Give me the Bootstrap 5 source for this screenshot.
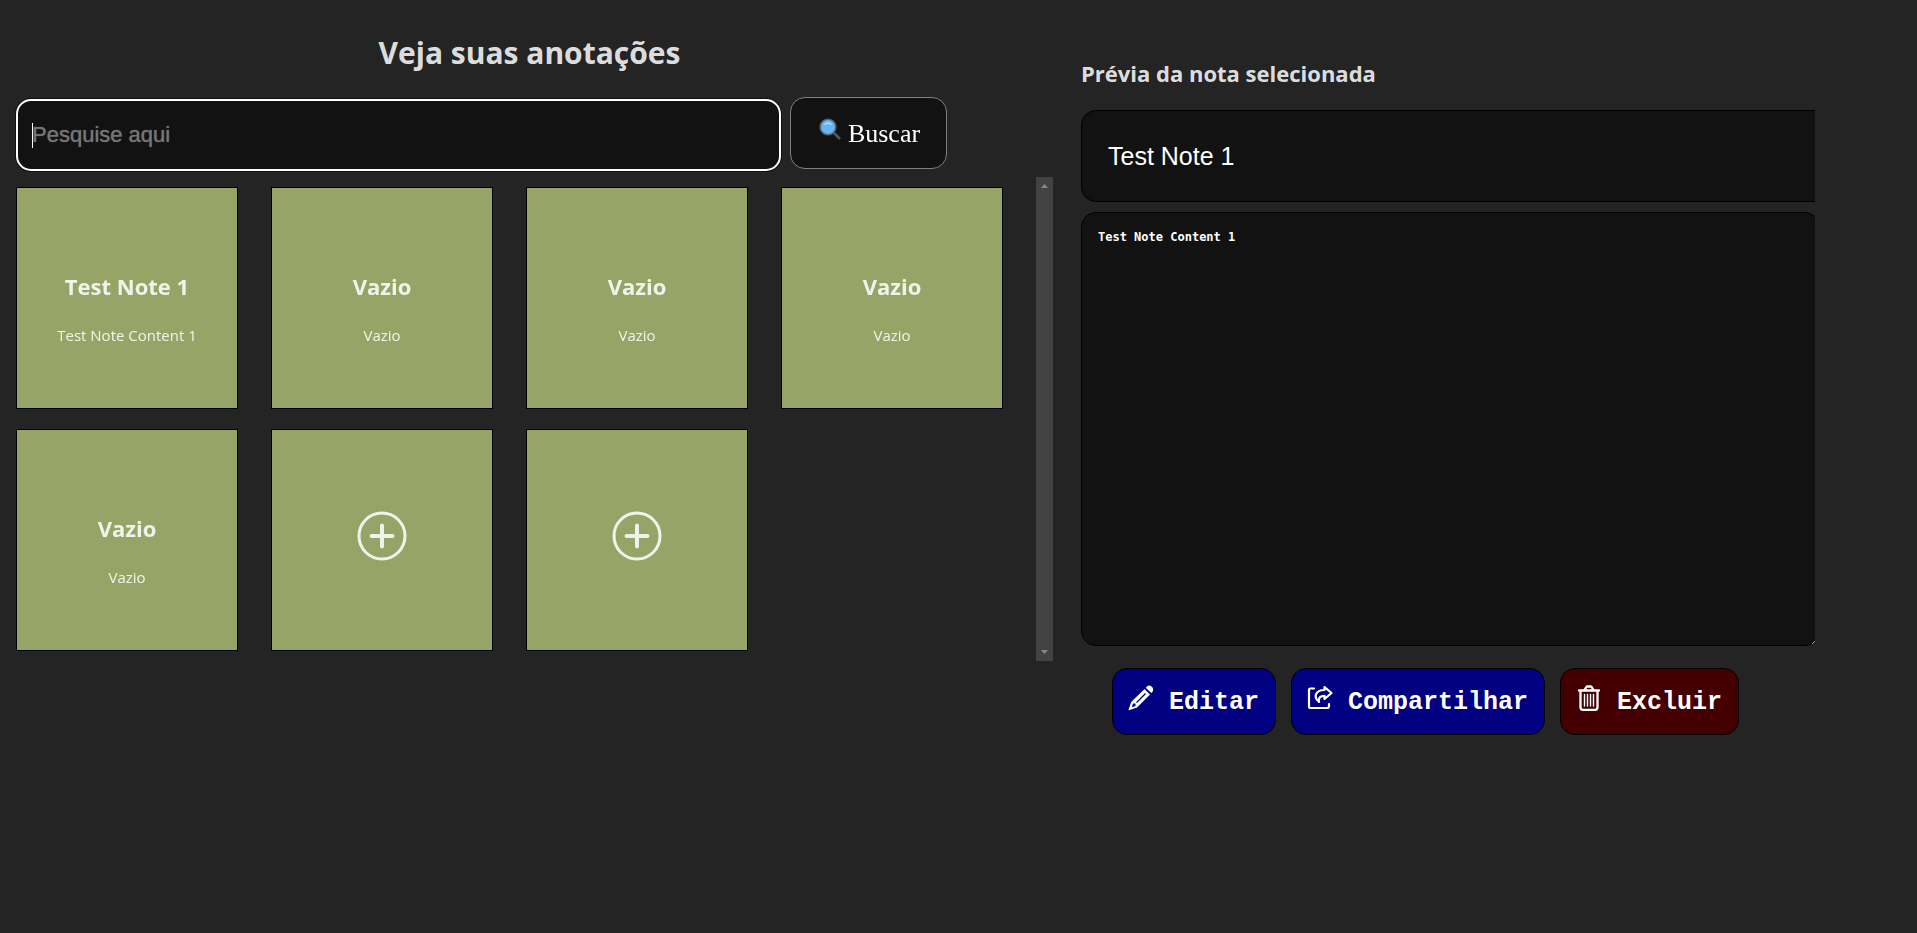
<!DOCTYPE html>
<html lang="pt-BR">
<head>
<meta charset="utf-8">
<meta name="viewport" content="width=device-width, initial-scale=1">
<title>Anotações</title>
<link href="https://cdn.jsdelivr.net/npm/bootstrap@5.3.0/dist/css/bootstrap.min.css" rel="stylesheet">
<style>
  body { background: #242424; color: rgba(255, 255, 255, .87); font-family: "Open Sans", sans-serif; font-size: 15px; line-height: 24px; }
  .page { padding-left: 6px; }
  .notes-pane { flex: 0 1 1047px; min-width: 0; }
  .page-title { font-size: 30px; line-height: 40px; font-weight: 700; padding-top: 33px; }
  .search-row { padding: 24px 0 6px 10px; gap: 9px; }
  /* the thin gradient is the text cursor of the focused box */
  .search-box { flex: 0 1 765px; height: 72px; margin-top: 2px; border: 2px solid #fff; border-radius: 15px; background: #121212 linear-gradient(#fff, #fff) 14px 50% / 1px 25px no-repeat; color: #fff; font: 22px "Liberation Sans", sans-serif; padding: 0 14px; min-width: 0; box-shadow: 0 0 0 1px #101010; caret-color: transparent; }
  .search-box:focus { outline: 0; }
  .search-box::placeholder { color: #757575; opacity: 1; text-shadow: 0 0 1px #757575; }
  .search-btn { width: 157px; height: 72px; border: 1px solid #808080; border-radius: 15px; background: #121212; color: #fff; font: 26px/36px "Liberation Serif", serif; padding: 2px 0 0 2px; }
  .search-btn svg { margin-bottom: 10px; margin-right: 7px; }
  .note-list { height: 484px; }
  .note-grid { display: grid; grid-template-columns: repeat(auto-fill, 222px); gap: 20px 33px; padding: 10px; align-content: start; }
  .note-tile { height: 222px; border: 1px solid #000; background: #96a467; color: rgba(255, 255, 255, .87); padding: 0; }
  .note-tile h2 { font-size: 22px; line-height: 32px; font-weight: 700; margin: 21px 0; }
  .note-tile p { margin: 0; }
  .scroll-track { width: 17px; background: #424242; padding: 7px 0; }
  .preview-pane { flex: 1 1 0; min-width: 0; padding: 57px 102px 0 28px; }
  .preview-pane h2 { font-size: 22px; line-height: 32px; font-weight: 700; margin-bottom: 21px; }
  .note-fields { overflow: hidden; }
  .note-name, .note-text { display: block; border: 1px solid #000; border-radius: 15px; background: #121212; color: #fff; }
  .note-name { width: calc(100% + 40px); height: 92px; padding: 0 26px; font: 25px "Liberation Sans", sans-serif; margin-bottom: 10px; }
  .note-text { width: calc(100% + 5px); height: 434px; padding: 16px; font: bold 12px/16px "DejaVu Sans Mono", monospace; }
  .action-row { padding: 22px 0 0 31px; gap: 15px; }
  .action-btn { height: 67px; border: 1px solid #000; border-radius: 15px; background: #000080; color: #fff; font: bold 25px/32px "Liberation Mono", monospace; padding: 3px 16px 0 15px; white-space: nowrap; }
  .action-btn svg { margin-right: 15px; margin-bottom: 11px; }
  .action-danger { background: #440000; }
</style>
</head>
<body>
<div class="page d-flex">
  <main class="notes-pane">
    <h1 class="page-title text-center mb-0">Veja suas anotações</h1>
    <form class="search-row d-flex align-items-start" role="search">
      <input class="search-box" type="text" placeholder="Pesquise aqui" aria-label="Pesquise aqui" autofocus>
      <button class="search-btn d-flex align-items-center justify-content-center" type="button"><svg width="22" height="22" viewBox="0 0 22 22" aria-hidden="true"><path d="M14 14l7 7" stroke="#455a64" stroke-width="2.6"/><circle cx="9" cy="9" r="7.8" fill="#64b5f6" stroke="#616161" stroke-width="1.6"/><path d="M5.5 6.5q3.500-3 7 0" stroke="#bbdefb" stroke-width="1.300" fill="none"/></svg>Buscar</button>
    </form>
    <div class="note-list d-flex">
      <div class="note-grid flex-grow-1">
        <button class="note-tile" type="button"><h2>Test Note 1</h2><p>Test Note Content 1</p></button>
        <button class="note-tile" type="button"><h2>Vazio</h2><p>Vazio</p></button>
        <button class="note-tile" type="button"><h2>Vazio</h2><p>Vazio</p></button>
        <button class="note-tile" type="button"><h2>Vazio</h2><p>Vazio</p></button>
        <button class="note-tile" type="button"><h2>Vazio</h2><p>Vazio</p></button>
        <button class="note-tile" type="button" aria-label="Adicionar nota"><svg class="mb-2" width="50" height="50" viewBox="0 0 50 50" fill="none" stroke="currentColor" stroke-linecap="round"><circle cx="25" cy="25" r="23" stroke-width="3"/><path d="M25 14.500v21M14.500 25h21" stroke-width="4"/></svg></button>
        <button class="note-tile" type="button" aria-label="Adicionar nota"><svg class="mb-2" width="50" height="50" viewBox="0 0 50 50" fill="none" stroke="currentColor" stroke-linecap="round"><circle cx="25" cy="25" r="23" stroke-width="3"/><path d="M25 14.500v21M14.500 25h21" stroke-width="4"/></svg></button>
      </div>
      <div class="scroll-track d-flex flex-column justify-content-between align-items-center flex-shrink-0" aria-hidden="true">
        <svg width="7" height="4" viewBox="0 0 7 4"><path d="M0 4L3.500 0 7 4z" fill="#868686"/></svg>
        <svg width="7" height="4" viewBox="0 0 7 4"><path d="M0 0L3.500 4 7 0z" fill="#868686"/></svg>
      </div>
    </div>
  </main>
  <aside class="preview-pane">
    <h2>Prévia da nota selecionada</h2>
    <div class="note-fields">
      <input class="note-name" type="text" value="Test Note 1" aria-label="Título da nota">
      <textarea class="note-text" aria-label="Conteúdo da nota">Test Note Content 1</textarea>
    </div>
    <div class="action-row d-flex">
      <button class="action-btn d-flex align-items-center" type="button"><svg width="26" height="26" viewBox="0 0 26 26" fill="currentColor" fill-rule="evenodd"><path d="M16.500 4l5.500 5.500L9 22.500 1 25.300Q.4 25.400.6 24.600L3.200 17zM5 18.500l-1.200 3.700 3.700-1.200v-2.500zM8 17.200l1 .8 9-9-1-1z"/><path d="M17.800 2.700l1.500-1.500q2.200-1.500 4.500.6t.9 4.700L23.300 8z"/></svg>Editar</button>
      <button class="action-btn d-flex align-items-center" type="button"><svg width="26" height="26" viewBox="0 0 26 26" fill="none" stroke="currentColor" stroke-width="2.200" stroke-linejoin="round" stroke-linecap="round"><path d="M7 3.500H3.500Q2 3.500 2 5v16.500Q2 23 3.500 23H20q2 0 2-2v-2"/><path d="M17.500 2l7 6-7 6v-3.200c-4 0-6 1.500-5.500 6C6 12 8.500 5 17.500 5z"/></svg>Compartilhar</button>
      <button class="action-btn action-danger d-flex align-items-center" type="button"><svg width="26" height="26" viewBox="0 0 26 26" fill="none" stroke="currentColor" stroke-width="2.300" stroke-linecap="round"><path d="M3 5.500h20M8.500 5L10 2.500q.5-1 1.500-1h3q1 0 1.500 1L17.500 5M4.500 6v16q0 3 3 3h11q3 0 3-3V6"/><path d="M8.500 9.500v11.500M11.500 9.500v11.500M14.500 9.500v11.500M17.500 9.500v11.500" stroke-width="1.400"/></svg>Excluir</button>
    </div>
  </aside>
</div>
<script src="https://cdn.jsdelivr.net/npm/bootstrap@5.3.0/dist/js/bootstrap.bundle.min.js"></script>
</body>
</html>
